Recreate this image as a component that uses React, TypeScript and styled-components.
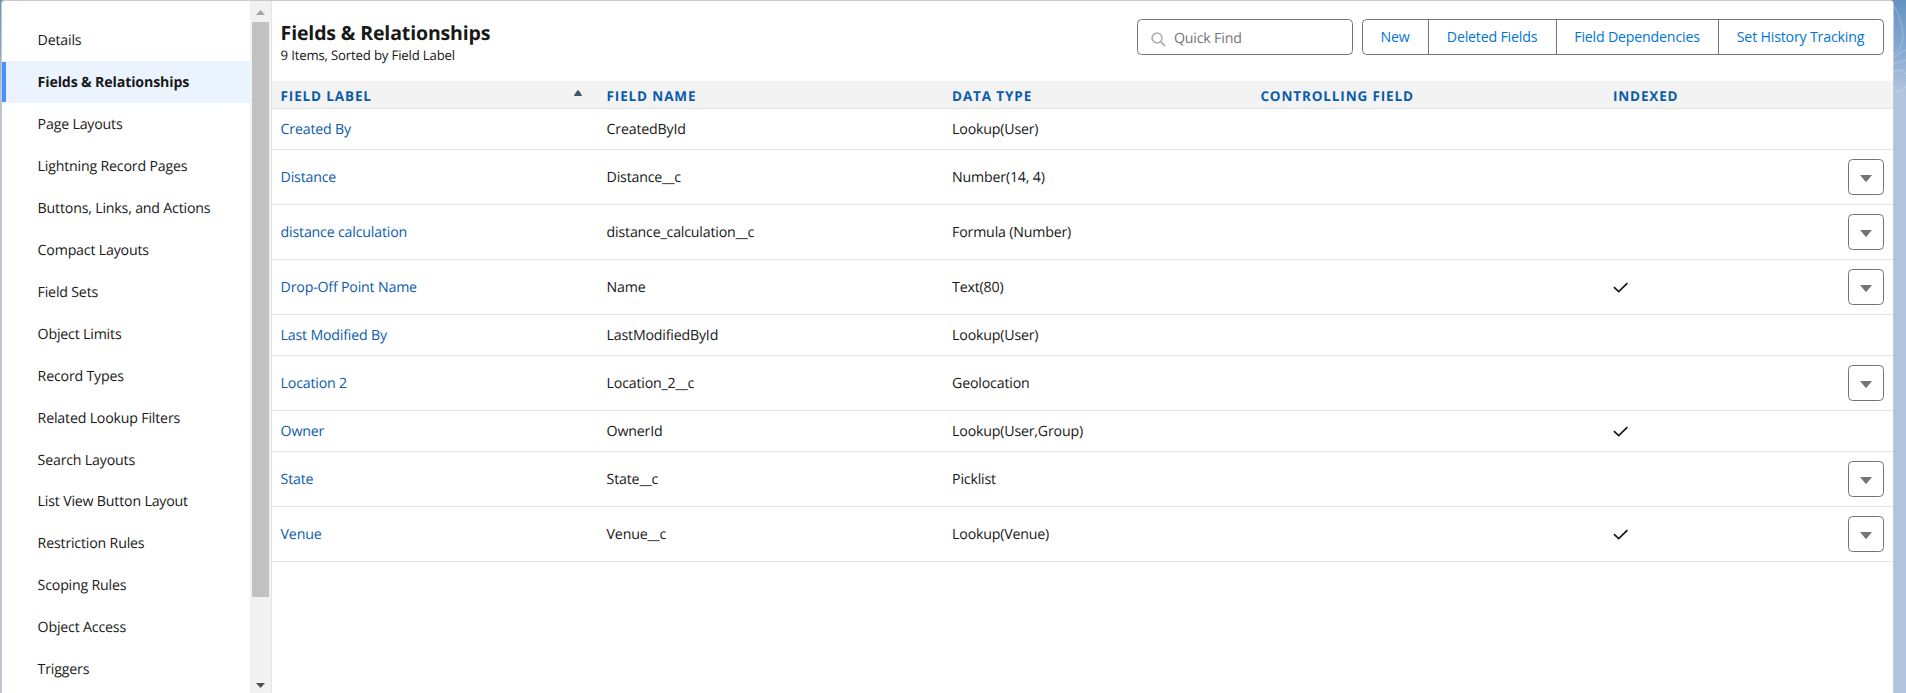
import React from 'react';
import styled, { createGlobalStyle, css } from 'styled-components';

const GlobalStyle = createGlobalStyle`
  *, *::before, *::after { box-sizing: border-box; }
  body {
    margin: 0;
    overflow: hidden;
    font-family: "Open Sans", "Noto Sans", sans-serif;
    font-size: 14.2px;
    letter-spacing: -0.19px;
    color: #181818;
    text-rendering: geometricPrecision;
  }
`;

const Page = styled.div`
  display: flex;
  height: 693px;
  padding-left: 1px;
  background: linear-gradient(180deg, #6692c0 0, #86a9d1 50px, #b0c4df 92px);
`;

const Card = styled.div`
  display: flex;
  flex: 1;
  border: 1px solid #c9c9c9;
  border-bottom: 0;
  border-radius: 4px 4px 0 0;
  background: #fff;
  overflow: hidden;
`;

const Backdrop = styled.div`
  flex: 0 0 12px;
  svg { display: block; }
`;

const Sidebar = styled.nav`
  flex: 0 0 248px;
  padding-top: 18px;
`;

const NavItem = styled.a<{ $active?: boolean }>`
  display: flex;
  align-items: center;
  height: 41.92px;
  padding: 2px 0 0 35.6px;
  ${(p) =>
    p.$active &&
    css`
      background: linear-gradient(#4992fe, #4992fe) 0 1px / 4px 40px no-repeat, #ebf4fe;
      font-weight: 700;
      letter-spacing: -0.15px;
    `}
`;

const Scrollbar = styled.div`
  flex: 0 0 22px;
  display: flex;
  flex-direction: column;
  justify-content: space-between;
  padding: 9px 0 5px 2px;
  background: #f1f1f1;
  border-right: 1px solid #e5e5e5;
  svg { display: block; margin-left: 4px; }
`;

const Thumb = styled.div`
  width: 17px;
  height: 575px;
  margin: 7px 0 auto;
  background: #c1c1c1;
`;

const Main = styled.main`
  flex: 1;
  display: flex;
  flex-direction: column;
`;

const Header = styled.header`
  display: flex;
  height: 80px;
  padding: 18px 9px 0 8.6px;
`;

const Titles = styled.div`
  flex: 1;
`;

const Title = styled.h1`
  margin: 1px 0 0;
  font-size: 19.5px;
  line-height: 26px;
  letter-spacing: -0.14px;
`;

const Subtitle = styled.p`
  margin: 0;
  font-size: 13.2px;
  line-height: 18px;
  letter-spacing: -0.18px;
`;

const Search = styled.label`
  display: flex;
  align-items: center;
  width: 216px;
  height: 36px;
  margin-right: 9px;
  padding: 2px 0 0 13px;
  border: 1px solid #747474;
  border-radius: 4.5px;
  color: #747474;
  svg { margin: 2px 8px 0 0; }
`;

const ButtonGroup = styled.div`
  display: flex;
  height: 36px;
  border: 1px solid #747474;
  border-radius: 4.5px;
`;

const GroupButton = styled.button<{ $width: number }>`
  width: ${(p) => p.$width}px;
  padding: 0 1px 1px 0;
  border: 0;
  background: none;
  font: inherit;
  letter-spacing: inherit;
  color: #0176d3;
  & + & { border-left: 1px solid #747474; }
`;

const Row = styled.div<{ $tall?: boolean }>`
  display: grid;
  grid-template-columns: 326px 345.5px 308.3px 352.5px 1fr;
  align-items: center;
  height: ${(p) => (p.$tall ? 55 : 41)}px;
  padding: 0 9px 0 8.6px;
  border-bottom: 1px solid #e5e5e5;
`;

const HeadRow = styled(Row)`
  height: 28px;
  background: #f3f3f3;
  color: #0b5cab;
  font-size: 13.5px;
  font-weight: 700;
  letter-spacing: 0.86px;
`;

const HeadCell = styled.div`
  display: flex;
  align-items: center;
  justify-content: space-between;
  padding-top: 2.5px;
  svg { margin: 0 25px 5px 0; }
`;

const FieldLink = styled.a`
  color: #0b5cab;
`;

const Indexed = styled.div`
  display: flex;
  align-items: center;
  justify-content: space-between;
  grid-column: 5;
`;

const MenuButton = styled.button`
  display: flex;
  align-items: center;
  justify-content: center;
  width: 36px;
  height: 36px;
  margin-left: auto;
  padding: 3px 0 0;
  border: 1px solid #747474;
  border-radius: 4.5px;
  background: #fff;
`;

const navItems = [
  'Details', 'Fields & Relationships', 'Page Layouts', 'Lightning Record Pages',
  'Buttons, Links, and Actions', 'Compact Layouts', 'Field Sets', 'Object Limits',
  'Record Types', 'Related Lookup Filters', 'Search Layouts', 'List View Button Layout',
  'Restriction Rules', 'Scoping Rules', 'Object Access', 'Triggers',
];

const actions = [
  { label: 'New', width: 65 },
  { label: 'Deleted Fields', width: 128 },
  { label: 'Field Dependencies', width: 162 },
  { label: 'Set History Tracking', width: 165 },
];

type Field = { label: string; name: string; type: string; indexed?: boolean; menu?: boolean };

const fields: Field[] = [
  { label: 'Created By', name: 'CreatedById', type: 'Lookup(User)' },
  { label: 'Distance', name: 'Distance__c', type: 'Number(14, 4)', menu: true },
  { label: 'distance calculation', name: 'distance_calculation__c', type: 'Formula (Number)', menu: true },
  { label: 'Drop-Off Point Name', name: 'Name', type: 'Text(80)', indexed: true, menu: true },
  { label: 'Last Modified By', name: 'LastModifiedById', type: 'Lookup(User)' },
  { label: 'Location 2', name: 'Location_2__c', type: 'Geolocation', menu: true },
  { label: 'Owner', name: 'OwnerId', type: 'Lookup(User,Group)', indexed: true },
  { label: 'State', name: 'State__c', type: 'Picklist', menu: true },
  { label: 'Venue', name: 'Venue__c', type: 'Lookup(Venue)', indexed: true, menu: true },
];

const CheckIcon = () => (
  <svg width="17" height="14" viewBox="0 0 17 14" fill="none">
    <path d="M0.9 7.2 L5.7 11.6 L14.4 3.2" stroke="#181818" strokeWidth="1.8" />
  </svg>
);

export default function App() {
  return (
    <>
      <GlobalStyle />
      <Page>
        <Card>
          <Sidebar>
            {navItems.map((item) => (
              <NavItem key={item} $active={item === 'Fields & Relationships'}>{item}</NavItem>
            ))}
          </Sidebar>
          <Scrollbar>
            <svg width="9" height="5"><path d="M0 5 L4.5 0 L9 5 Z" fill="#a3a3a3" /></svg>
            <Thumb />
            <svg width="9" height="5"><path d="M0 0 L9 0 L4.5 5 Z" fill="#505050" /></svg>
          </Scrollbar>
          <Main>
            <Header>
              <Titles>
                <Title>Fields &amp; Relationships</Title>
                <Subtitle>9 Items, Sorted by Field Label</Subtitle>
              </Titles>
              <Search>
                <svg width="15" height="15" viewBox="0 0 15 15" fill="none" stroke="#b0b0b0">
                  <circle cx="6" cy="6" r="4.9" strokeWidth="1.7" />
                  <path d="M9.6 9.6 L14 14.2" strokeWidth="1.9" />
                </svg>
                Quick Find
              </Search>
              <ButtonGroup>
                {actions.map((a) => (
                  <GroupButton key={a.label} $width={a.width}>{a.label}</GroupButton>
                ))}
              </ButtonGroup>
            </Header>
            <HeadRow>
              <HeadCell>
                FIELD LABEL
                <svg width="8" height="6"><path d="M0 6 Q0 5 .6 4.4 L3.2 .6 Q4 -.3 4.8 .6 L7.4 4.4 Q8 5 8 6 Z" fill="#44576b" /></svg>
              </HeadCell>
              <HeadCell>FIELD NAME</HeadCell>
              <HeadCell>DATA TYPE</HeadCell>
              <HeadCell>CONTROLLING FIELD</HeadCell>
              <HeadCell>INDEXED</HeadCell>
            </HeadRow>
            {fields.map((f) => (
              <Row key={f.label} $tall={f.menu}>
                <FieldLink>{f.label}</FieldLink>
                <div>{f.name}</div>
                <div>{f.type}</div>
                <Indexed>
                  {f.indexed && <CheckIcon />}
                  {f.menu && (
                    <MenuButton aria-label={`Actions for ${f.label}`}>
                      <svg width="12" height="7"><path d="M0 0 H12 L6.6 6.6 Q6 7.2 5.4 6.6 Z" fill="#747474" /></svg>
                    </MenuButton>
                  )}
                </Indexed>
              </Row>
            ))}
          </Main>
        </Card>
        <Backdrop>
          <svg width="12" height="110" fill="none" stroke="#fff" strokeOpacity=".28" strokeWidth="1">
            <path d="M0 6 Q9 20 9 38 Q8 48 0 55" />
            <path d="M1 57 Q6 52 12 50" />
            <path d="M0 64 Q6 61 12 60" />
            <path d="M0 72 Q8 67 12 74 M0 91 Q8 93 12 86" />
            <path d="M0 101 Q6 98 12 101" strokeOpacity=".12" />
          </svg>
        </Backdrop>
      </Page>
    </>
  );
}
